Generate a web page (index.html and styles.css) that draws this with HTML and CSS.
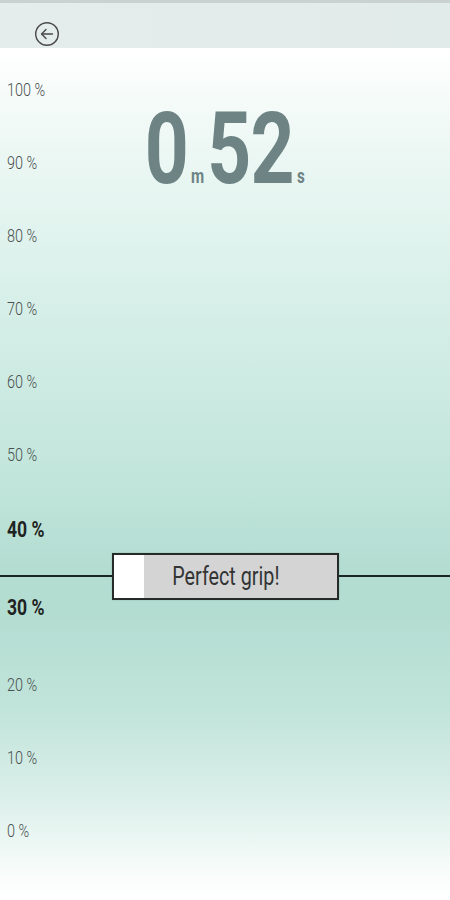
FILE: index.html
```html
<!DOCTYPE html>
<html lang="en">
<head>
<meta charset="utf-8">
<title>Grip</title>
<link rel="stylesheet" href="styles.css">
</head>
<body>
<div class="app">
  <header class="topbar">
    <button class="back" aria-label="Back">
      <svg width="26" height="26" viewBox="0 0 26 26" fill="none" stroke="#4a4a4a" stroke-width="1.4" stroke-linecap="round" stroke-linejoin="round">
        <circle cx="13" cy="13" r="11.3"/>
        <path d="M18.5 13H7.8"/>
        <path d="M12 8.6L7.6 13L12 17.4"/>
      </svg>
    </button>
  </header>
  <main class="meter">
    <ul class="scale">
      <li class="tick"><span class="tick-label">100 %</span></li>
      <li class="tick"><span class="tick-label">90 %</span></li>
      <li class="tick"><span class="tick-label">80 %</span></li>
      <li class="tick"><span class="tick-label">70 %</span></li>
      <li class="tick"><span class="tick-label">60 %</span></li>
      <li class="tick"><span class="tick-label">50 %</span></li>
      <li class="tick tick-bold tick-above"><span class="tick-label">40 %</span></li>
      <li class="tick tick-bold tick-below"><span class="tick-label">30 %</span></li>
      <li class="tick"><span class="tick-label">20 %</span></li>
      <li class="tick"><span class="tick-label">10 %</span></li>
      <li class="tick"><span class="tick-label">0 %</span></li>
    </ul>
    <div class="timer">
      <span class="num">0</span><span class="unit">m</span><span class="num">52</span><span class="unit">s</span>
    </div>
    <div class="marker" style="top: 527px;">
      <div class="status">
        <div class="fill" style="width: 30px;"></div>
        <span class="status-text">Perfect grip!</span>
      </div>
    </div>
  </main>
</div>
</body>
</html>
```

FILE: styles.css
```css
* { box-sizing: border-box; }

html, body {
  margin: 0;
  padding: 0;
}

body {
  width: 450px;
  height: 900px;
  overflow: hidden;
  font-family: Roboto, "DejaVu Sans", sans-serif;
  background: #ffffff;
}

.app {
  display: flex;
  flex-direction: column;
  height: 900px;
}

.topbar {
  height: 48px;
  flex: none;
  background: linear-gradient(to right, #e4edeb, #e1ebe9);
  border-top: 3px solid #c9d2d0;
  display: flex;
  align-items: flex-start;
  padding: 18px 0 0 34px;
}

.back {
  width: 26px;
  height: 26px;
  padding: 0;
  margin: 0;
  border: none;
  background: none;
  display: block;
}

.back svg { display: block; }

.meter {
  position: relative;
  flex: 1;
  display: grid;
  grid-template-columns: 1fr;
  grid-template-rows: 1fr;
  background: linear-gradient(to bottom,
    #ffffff 0px,
    #eef8f5 90px,
    #d6efe8 260px,
    #c3e6dc 420px,
    #b4ddd2 520px,
    #b4ddd2 570px,
    #c1e4da 660px,
    #d8eee8 740px,
    #eef8f5 800px,
    #fafdfc 830px,
    #ffffff 852px);
}

.scale {
  grid-area: 1 / 1;
  list-style: none;
  margin: 0;
  padding: 5px 0 0 7px;
  display: flex;
  flex-direction: column;
}

.tick {
  height: 73px;
  display: flex;
  align-items: center;
  font-size: 19px;
  font-weight: 300;
  color: #4a5150;
}

.tick-label {
  display: inline-block;
  transform: scaleX(0.76);
  transform-origin: left center;
}

.tick-bold {
  font-weight: 700;
  font-size: 22px;
  color: #1f2422;
}

.tick-bold .tick-label {
  transform: scaleX(0.8);
}

.tick-above { margin-top: 2px; }
.tick-below { margin-top: 5px; margin-bottom: 4px; }

.timer {
  grid-area: 1 / 1;
  justify-self: center;
  align-self: start;
  margin-top: 50px;
  margin-left: 2px;
  display: flex;
  align-items: baseline;
  color: #6d8384;
  font-weight: 700;
  line-height: 1;
  transform: scaleX(0.76);
  transform-origin: center top;
}

.num {
  font-size: 101px;
  letter-spacing: -1px;
}

.unit {
  font-size: 20px;
  margin: 0 4px 0 4px;
}

.marker {
  position: absolute;
  left: 0;
  right: 0;
  height: 2px;
  background: #1b2523;
}

.status {
  position: absolute;
  left: 112px;
  top: -22px;
  width: 227px;
  height: 47px;
  border: 2px solid #262b2a;
  background: #d4d4d4;
  display: flex;
  align-items: center;
  justify-content: center;
  box-shadow: 0 0 2px rgba(0,0,0,0.15);
}

.fill {
  position: absolute;
  left: 0;
  top: 0;
  bottom: 0;
  background: #ffffff;
}

.status-text {
  position: relative;
  display: inline-block;
  font-size: 25px;
  font-weight: 400;
  color: #333535;
  line-height: 1;
  transform: scaleX(0.79);
}
```
